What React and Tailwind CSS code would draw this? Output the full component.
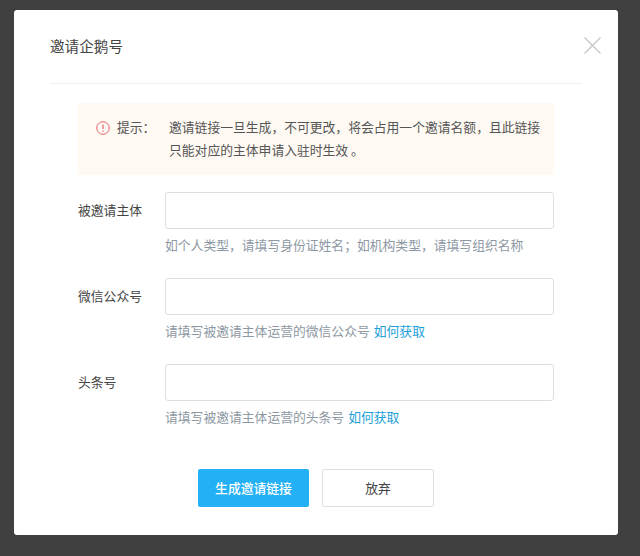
import React from "react";

const font = { fontFamily: '"Noto Sans CJK SC", "Liberation Sans", sans-serif' };

function Field({ label, hint, link }) {
  return (
    <div className="flex">
      <label className="w-[87px] pt-[9px] text-[12.8px] leading-[17px] text-[#444]">{label}</label>
      <div className="w-[389px]">
        <input className="block h-[37px] w-full rounded-[3px] border border-[#dcdfe3] bg-white" />
        <p className="mt-[7px] h-[18px] text-[12.8px] leading-[18px] text-[#8d98a3]">
          {hint}
          {link && <a className="ml-1 text-[#1d9fd8]">如何获取</a>}
        </p>
      </div>
    </div>
  );
}

export default function App() {
  return (
    <div className="h-[556px] w-[640px] overflow-hidden bg-[#404040] pl-[14px] pt-[10px]" style={font}>
      <div className="relative h-[525px] w-[604px] rounded-[3px] bg-white px-[36px]">
        <div className="flex h-[74px] items-center border-b border-[#f0f0f0]">
          <h2 className="-mt-[1px] text-[14.6px] font-normal text-[#444]">邀请企鹅号</h2>
        </div>
        <button className="absolute right-[17px] top-[27px] text-[#c4c4c4]">
          <svg width="17" height="17" viewBox="0 0 17 17" fill="none" stroke="currentColor" strokeWidth="1.2" className="block">
            <path d="M0.5 0.5L16.5 16.5M16.5 0.5L0.5 16.5" />
          </svg>
        </button>
        <div className="ml-[28px] mt-[19px] flex h-[72px] w-[476px] rounded-[2px] bg-[#fef9f3] pl-[18px] pt-[12px] text-[12.8px] leading-[23px] text-[#555]">
          <svg width="14" height="14" viewBox="0 0 14 14" fill="none" className="mr-[7px] mt-[6px] shrink-0">
            <circle cx="7" cy="7" r="6.3" stroke="#e4656a" strokeWidth="1" />
            <path d="M7 3.5V8M7 9.5V10.7" stroke="#e4656a" strokeWidth="1.2" />
          </svg>
          <span className="w-[52px] shrink-0">提示：</span>
          <p className="w-[376px]">邀请链接一旦生成，不可更改，将会占用一个邀请名额，且此链接只能对应的主体申请入驻时生效 。</p>
        </div>
        <div className="ml-[28px] mt-[17px] flex flex-col gap-[24px]">
          <Field label="被邀请主体" hint="如个人类型，请填写身份证姓名；如机构类型，请填写组织名称" />
          <Field label="微信公众号" hint="请填写被邀请主体运营的微信公众号" link />
          <Field label="头条号" hint="请填写被邀请主体运营的头条号" link />
        </div>
        <div className="ml-[148px] mt-[43px] flex gap-[13px]">
          <button className="h-[38px] w-[111px] rounded-[2px] bg-[#23b0f5] text-[12.8px] font-medium text-white">生成邀请链接</button>
          <button className="h-[38px] w-[112px] rounded-[2px] border border-[#dcdfe3] bg-white text-[12.8px] text-[#444]">放弃</button>
        </div>
      </div>
    </div>
  );
}
